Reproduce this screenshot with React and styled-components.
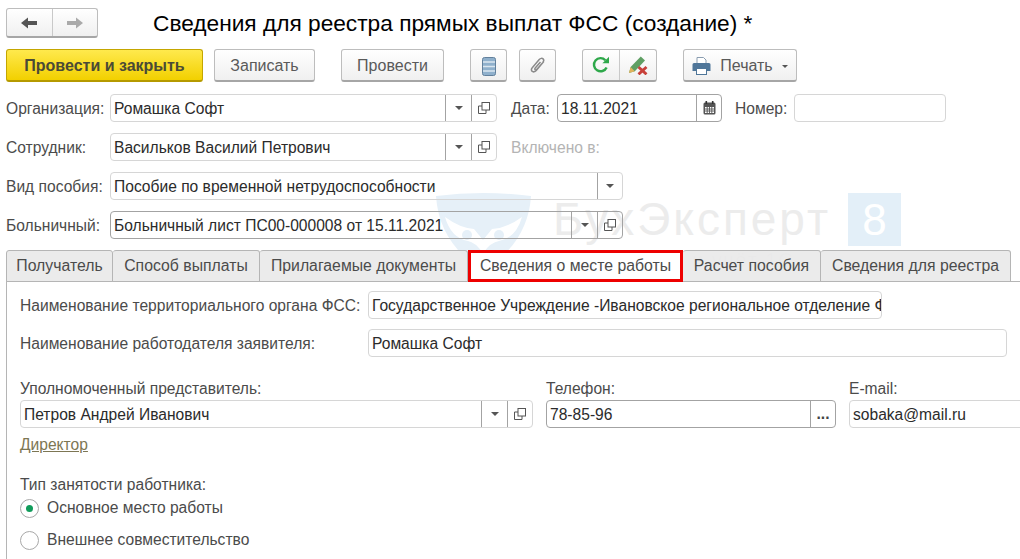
import React from "react";
import styled, { createGlobalStyle } from "styled-components";

const GlobalStyle = createGlobalStyle`
  html, body {
    margin: 0;
    padding: 0;
    background: #fff;
  }
  body {
    font-family: "Liberation Sans", Arial, sans-serif;
    font-size: 15.6px;
    color: #4b4b4b;
  }
`;

const BackIcon = ({ color }) => (
  <svg width="18" height="14" viewBox="0 0 18 14">
    <path d="M1 7 L8 1.5 V5 H17 V9 H8 V12.5 Z" fill={color} />
  </svg>
);

const ForwardIcon = ({ color }) => (
  <svg width="18" height="14" viewBox="0 0 18 14">
    <path d="M17 7 L10 1.5 V5 H1 V9 H10 V12.5 Z" fill={color} />
  </svg>
);

const ListIcon = () => (
  <svg width="14" height="19" viewBox="0 0 14 19">
    <rect x="0.5" y="0.5" width="13" height="18" rx="2" fill="#8fb0cc" stroke="#62809c" />
    <path d="M1 5 H13 M1 9.5 H13 M1 14 H13" stroke="#dbe6ef" strokeWidth="1.4" />
  </svg>
);

const ClipIcon = () => (
  <svg width="16" height="18" viewBox="0 0 18 20" fill="none" stroke="#8a8a8a" strokeWidth="1.7">
    <path d="M15.5 5 L7 15 C5.5 16.8 3.4 17 2.4 16 C1.3 15 1.6 13 3 11.4 L10.4 2.8 C11.8 1.2 13.6 1 14.7 2 C15.8 3 15.6 4.6 14.3 6.2 L7.8 13.7 C7.1 14.5 6.2 14.7 5.7 14.2 C5.2 13.7 5.4 12.9 6.1 12.1 L11.8 5.5" />
  </svg>
);

const RefreshIcon = () => (
  <svg width="18" height="18" viewBox="0 0 18 18" fill="none">
    <path d="M14.6 11.4 A6.6 6.6 0 1 1 13.4 4.2" stroke="#2ea84a" strokeWidth="2.4" />
    <path d="M10.4 7.2 H17 V0.8 Z" fill="#2ea84a" />
  </svg>
);

const ClearIcon = () => (
  <svg width="20" height="20" viewBox="0 0 20 20">
    <path d="M1 18 L2.6 12 L12.8 1.4 L17 5.4 L6.8 16.2 Z" fill="#5f9f63" />
    <path d="M1 18 L2.6 12 L6.8 16.2 Z" fill="#e2b35c" />
    <path d="M10.5 12 L18.5 19.4 M18.5 12 L10.5 19.4" stroke="#c8403a" strokeWidth="2.8" />
  </svg>
);

const PrinterIcon = () => (
  <svg width="19" height="18" viewBox="0 0 19 18">
    <path d="M5 0.5 H11.5 L14 3 V8 H5 Z" fill="#fff" stroke="#8a9db0" />
    <path d="M2 6 H17 A1.5 1.5 0 0 1 18.5 7.5 V14 H15 V11 H4 V14 H0.5 V7.5 A1.5 1.5 0 0 1 2 6 Z" fill="#4f7699" />
    <rect x="4.5" y="11.5" width="10" height="6" fill="#fff" stroke="#4f7699" />
  </svg>
);

const CalendarIcon = () => (
  <svg width="13" height="14" viewBox="0 0 13 14">
    <rect x="0.5" y="1.5" width="12" height="12" rx="1.5" fill="#555" />
    <rect x="2.5" y="0" width="1.6" height="3" fill="#333" />
    <rect x="8.9" y="0" width="1.6" height="3" fill="#333" />
    <path d="M2 6 H11 V12 H2 Z" fill="#fff" />
    <path d="M2 8 H11 M2 10 H11 M4.2 6 V12 M6.5 6 V12 M8.8 6 V12" stroke="#555" strokeWidth="0.9" />
  </svg>
);

const OpenIcon = () => (
  <svg width="12" height="12" viewBox="0 0 12 12" fill="none" stroke="#555">
    <rect x="4" y="0.5" width="7.5" height="7.5" />
    <path d="M4 4 H0.5 V11.5 H8 V8" />
  </svg>
);

const Caret = styled.span`
  width: 0;
  height: 0;
  border-left: ${(p) => p.$size || 4}px solid transparent;
  border-right: ${(p) => p.$size || 4}px solid transparent;
  border-top: ${(p) => p.$size || 4}px solid #555;
`;

const Page = styled.div`
  position: relative;
  width: 1020px;
  height: 559px;
  overflow: hidden;
  background: #fff;
`;

const Content = styled.div`
  position: relative;
  z-index: 1;
  padding-top: 8px;
`;

const Watermark = styled.div`
  position: absolute;
  z-index: 0;
  left: 436px;
  top: 193px;
  display: flex;
  align-items: flex-start;
`;

const MarkName = styled.div`
  width: 295px;
  margin-left: 22px;
  font-size: 46px;
  line-height: 52px;
  letter-spacing: 3px;
  color: #ececec;
  white-space: nowrap;
`;

const MarkTag = styled.div`
  margin: 4px 0 0 22px;
  font-size: 20px;
  line-height: 22px;
  letter-spacing: 1.5px;
  color: #efefef;
  white-space: nowrap;
`;

const MarkEight = styled.div`
  width: 53px;
  height: 53px;
  background: #e3eff8;
  color: #fff;
  font-size: 44px;
  line-height: 53px;
  text-align: center;
`;

const TitleBar = styled.div`
  display: flex;
  align-items: center;
  height: 30px;
  padding-left: 6px;
`;

const Title = styled.h1`
  margin: 1px 0 0 55px;
  font-size: 22.7px;
  font-weight: 400;
  color: #000;
  white-space: nowrap;
`;

const Toolbar = styled.div`
  display: flex;
  align-items: stretch;
  height: 33px;
  margin-top: 11px;
  padding-left: 6px;
`;

const Button = styled.button`
  display: inline-flex;
  align-items: center;
  justify-content: center;
  gap: 9px;
  box-sizing: border-box;
  width: ${(p) => p.$w}px;
  margin-left: ${(p) => p.$ml || 0}px;
  padding: 2px 0 0;
  border: 1px solid #bdbdbd;
  border-bottom: 2px solid #a6a6a6;
  border-radius: 3px;
  background: linear-gradient(#ffffff, #f0f0f0);
  font: inherit;
  font-size: 16px;
  color: #5a5a5a;
`;

const PrimaryButton = styled(Button)`
  border-color: #c4a600;
  border-bottom-color: #b59a00;
  background: linear-gradient(#ffe94d, #f2d000);
  font-weight: 700;
  color: #4a4a36;
`;

const NavGroup = styled.div`
  display: flex;
  width: 92px;
  height: 30px;
  box-sizing: border-box;
  border: 1px solid #bdbdbd;
  border-bottom: 2px solid #a6a6a6;
  border-radius: 3px;
  background: linear-gradient(#ffffff, #f0f0f0);
`;

const NavCell = styled.div`
  flex: 1;
  display: flex;
  align-items: center;
  justify-content: center;
  & + & {
    border-left: 1px solid #c9c9c9;
  }
`;

const IconGroup = styled(NavGroup)`
  width: 75px;
  height: auto;
  margin-left: 26px;
`;

const Row = styled.div`
  display: flex;
  align-items: center;
  height: 28px;
  margin-top: ${(p) => p.$mt ?? 11}px;
  padding-left: ${(p) => p.$pl ?? 6}px;
`;

const Label = styled.label`
  box-sizing: border-box;
  flex: none;
  width: ${(p) => p.$w}px;
  margin-left: ${(p) => p.$ml || 0}px;
  padding-top: 2px;
  white-space: nowrap;
  color: ${(p) => (p.$muted ? "#b4b4b4" : "#4b4b4b")};
`;

const Field = styled.div`
  box-sizing: border-box;
  flex: none;
  display: flex;
  height: 28px;
  width: ${(p) => p.$w}px;
  margin-left: ${(p) => p.$ml || 0}px;
  border: 1px solid ${(p) => (p.$dark ? "#a3a3a3" : "#d6d6d6")};
  border-radius: 4px;
  overflow: hidden;
`;

const FieldValue = styled.div`
  flex: 1;
  min-width: 0;
  padding-left: 3px;
  font-size: 15.6px;
  line-height: 28px;
  color: #2b2b2b;
  white-space: nowrap;
  overflow: hidden;
`;

const FieldAction = styled.div`
  box-sizing: border-box;
  flex: none;
  width: 26px;
  display: flex;
  align-items: center;
  justify-content: center;
  border-left: 1px solid #a3a3a3;
  font-weight: 700;
  color: #444;
  &:last-child {
    width: 25px;
  }
`;

const Tabs = styled.div`
  display: flex;
  height: 32px;
  margin-top: 11px;
  padding-left: 6px;
  box-sizing: border-box;
`;

const Tab = styled.div`
  box-sizing: border-box;
  width: ${(p) => p.$w}px;
  height: 32px;
  padding-bottom: 1px;
  display: flex;
  align-items: center;
  justify-content: center;
  white-space: nowrap;
  font-size: 15.8px;
  border: 1px solid #b5b5b5;
  border-left-width: ${(p) => (p.$first ? 1 : 0)}px;
  border-radius: 3px 3px 0 0;
  background: rgba(232, 232, 232, 0.88);
`;

const ActiveTab = styled(Tab)`
  padding-bottom: 0;
  border: 3px solid #ee0000;
  border-radius: 0;
  background: #fff;
`;

const Panel = styled.div`
  height: 278px;
  margin-left: 6px;
  margin-top: -1px;
  border-top: 1px solid #b5b5b5;
  border-left: 1px solid #b5b5b5;
`;

const Columns = styled.div`
  display: flex;
  margin-top: 22px;
  padding-left: 13px;
`;

const Column = styled.div`
  flex: none;
  width: ${(p) => p.$w}px;
`;

const ColumnLabel = styled.div`
  height: 21px;
  line-height: 19px;
  white-space: nowrap;
`;

const Post = styled.a`
  display: block;
  margin: 8px 0 0 13px;
  color: #7d7653;
  text-decoration: underline;
  line-height: 17px;
`;

const GroupLabel = styled.div`
  margin: 23px 0 0 13px;
  line-height: 17px;
`;

const Radio = styled.div`
  display: flex;
  align-items: center;
  gap: 8px;
  height: 20px;
  margin: ${(p) => p.$mt}px 0 0 13px;
`;

const RadioMark = styled.span`
  box-sizing: border-box;
  width: 19px;
  height: 19px;
  display: flex;
  align-items: center;
  justify-content: center;
  border: 1px solid #a8a8a8;
  border-radius: 50%;
  &::after {
    content: "";
    display: ${(p) => (p.$on ? "block" : "none")};
    width: 7px;
    height: 7px;
    border-radius: 50%;
    background: #119c5b;
  }
`;

const App = () => {
  return (
    <Page>
      <GlobalStyle />
      <Watermark>
        <svg width="95" height="78" viewBox="0 0 95 78">
          <path d="M0 3 Q47 -3 95 3 Q92 50 47 78 Q3 50 0 3 Z" fill="#e6f0f8" />
          <path d="M9 24 Q24 35 38 36 L47 47 L56 36 Q71 35 86 24 Q80 45 63 48 Q55 49 47 60 Q39 49 32 48 Q15 45 9 24 Z" fill="#fff" />
          <circle cx="31" cy="42" r="5" fill="#e6f0f8" />
          <circle cx="63" cy="42" r="5" fill="#e6f0f8" />
        </svg>
        <div>
          <MarkName>БухЭксперт</MarkName>
          <MarkTag>Бухгалтерия и учёт 1С</MarkTag>
        </div>
        <MarkEight>8</MarkEight>
      </Watermark>
      <Content>
        <TitleBar>
          <NavGroup>
            <NavCell><BackIcon color="#555" /></NavCell>
            <NavCell><ForwardIcon color="#aaa" /></NavCell>
          </NavGroup>
          <Title>Сведения для реестра прямых выплат ФСС (создание) *</Title>
        </TitleBar>
        <Toolbar>
          <PrimaryButton $w={197}>Провести и закрыть</PrimaryButton>
          <Button $w={101} $ml={11}>Записать</Button>
          <Button $w={103} $ml={26}>Провести</Button>
          <Button $w={37} $ml={26}><ListIcon /></Button>
          <Button $w={37} $ml={12}><ClipIcon /></Button>
          <IconGroup>
            <NavCell><RefreshIcon /></NavCell>
            <NavCell><ClearIcon /></NavCell>
          </IconGroup>
          <Button $w={114} $ml={26}>
            <PrinterIcon />
            Печать
            <Caret $size={3} />
          </Button>
        </Toolbar>
        <Row $mt={12}>
          <Label $w={104}>Организация:</Label>
          <Field $w={387}>
            <FieldValue>Ромашка Софт</FieldValue>
            <FieldAction><Caret /></FieldAction>
            <FieldAction><OpenIcon /></FieldAction>
          </Field>
          <Label $w={46} $ml={14}>Дата:</Label>
          <Field $w={165} $dark>
            <FieldValue>18.11.2021</FieldValue>
            <FieldAction><CalendarIcon /></FieldAction>
          </Field>
          <Label $w={59} $ml={13}>Номер:</Label>
          <Field $w={152} />
        </Row>
        <Row>
          <Label $w={104}>Сотрудник:</Label>
          <Field $w={387}>
            <FieldValue>Васильков Василий Петрович</FieldValue>
            <FieldAction><Caret /></FieldAction>
            <FieldAction><OpenIcon /></FieldAction>
          </Field>
          <Label $w={100} $ml={14} $muted>Включено в:</Label>
        </Row>
        <Row>
          <Label $w={104}>Вид пособия:</Label>
          <Field $w={513}>
            <FieldValue>Пособие по временной нетрудоспособности</FieldValue>
            <FieldAction><Caret /></FieldAction>
          </Field>
        </Row>
        <Row>
          <Label $w={104}>Больничный:</Label>
          <Field $w={513} $dark>
            <FieldValue>Больничный лист ПС00-000008 от 15.11.2021</FieldValue>
            <FieldAction><Caret /></FieldAction>
            <FieldAction><OpenIcon /></FieldAction>
          </Field>
        </Row>
        <Tabs>
          <Tab $w={107} $first>Получатель</Tab>
          <Tab $w={147}>Способ выплаты</Tab>
          <Tab $w={208}>Прилагаемые документы</Tab>
          <ActiveTab $w={215}>Сведения о месте работы</ActiveTab>
          <Tab $w={138}>Расчет пособия</Tab>
          <Tab $w={190}>Сведения для реестра</Tab>
        </Tabs>
        <Panel>
          <Row $mt={9} $pl={13}>
            <Label $w={348}>Наименование территориального органа ФСС:</Label>
            <Field $w={514}>
              <FieldValue>Государственное Учреждение -Ивановское региональное отделение Фонда</FieldValue>
            </Field>
          </Row>
          <Row $mt={10} $pl={13}>
            <Label $w={348}>Наименование работодателя заявителя:</Label>
            <Field $w={639}>
              <FieldValue>Ромашка Софт</FieldValue>
            </Field>
          </Row>
          <Columns>
            <Column $w={526}>
              <ColumnLabel>Уполномоченный представитель:</ColumnLabel>
              <Field $w={513}>
                <FieldValue>Петров Андрей Иванович</FieldValue>
                <FieldAction><Caret /></FieldAction>
                <FieldAction><OpenIcon /></FieldAction>
              </Field>
            </Column>
            <Column $w={303}>
              <ColumnLabel>Телефон:</ColumnLabel>
              <Field $w={290} $dark>
                <FieldValue>78-85-96</FieldValue>
                <FieldAction>...</FieldAction>
              </Field>
            </Column>
            <Column $w={200}>
              <ColumnLabel>E-mail:</ColumnLabel>
              <Field $w={200}>
                <FieldValue>sobaka@mail.ru</FieldValue>
              </Field>
            </Column>
          </Columns>
          <Post>Директор</Post>
          <GroupLabel>Тип занятости работника:</GroupLabel>
          <Radio $mt={5}>
            <RadioMark $on />
            Основное место работы
          </Radio>
          <Radio $mt={12}>
            <RadioMark />
            Внешнее совместительство
          </Radio>
        </Panel>
      </Content>
    </Page>
  );
};

export default App;
